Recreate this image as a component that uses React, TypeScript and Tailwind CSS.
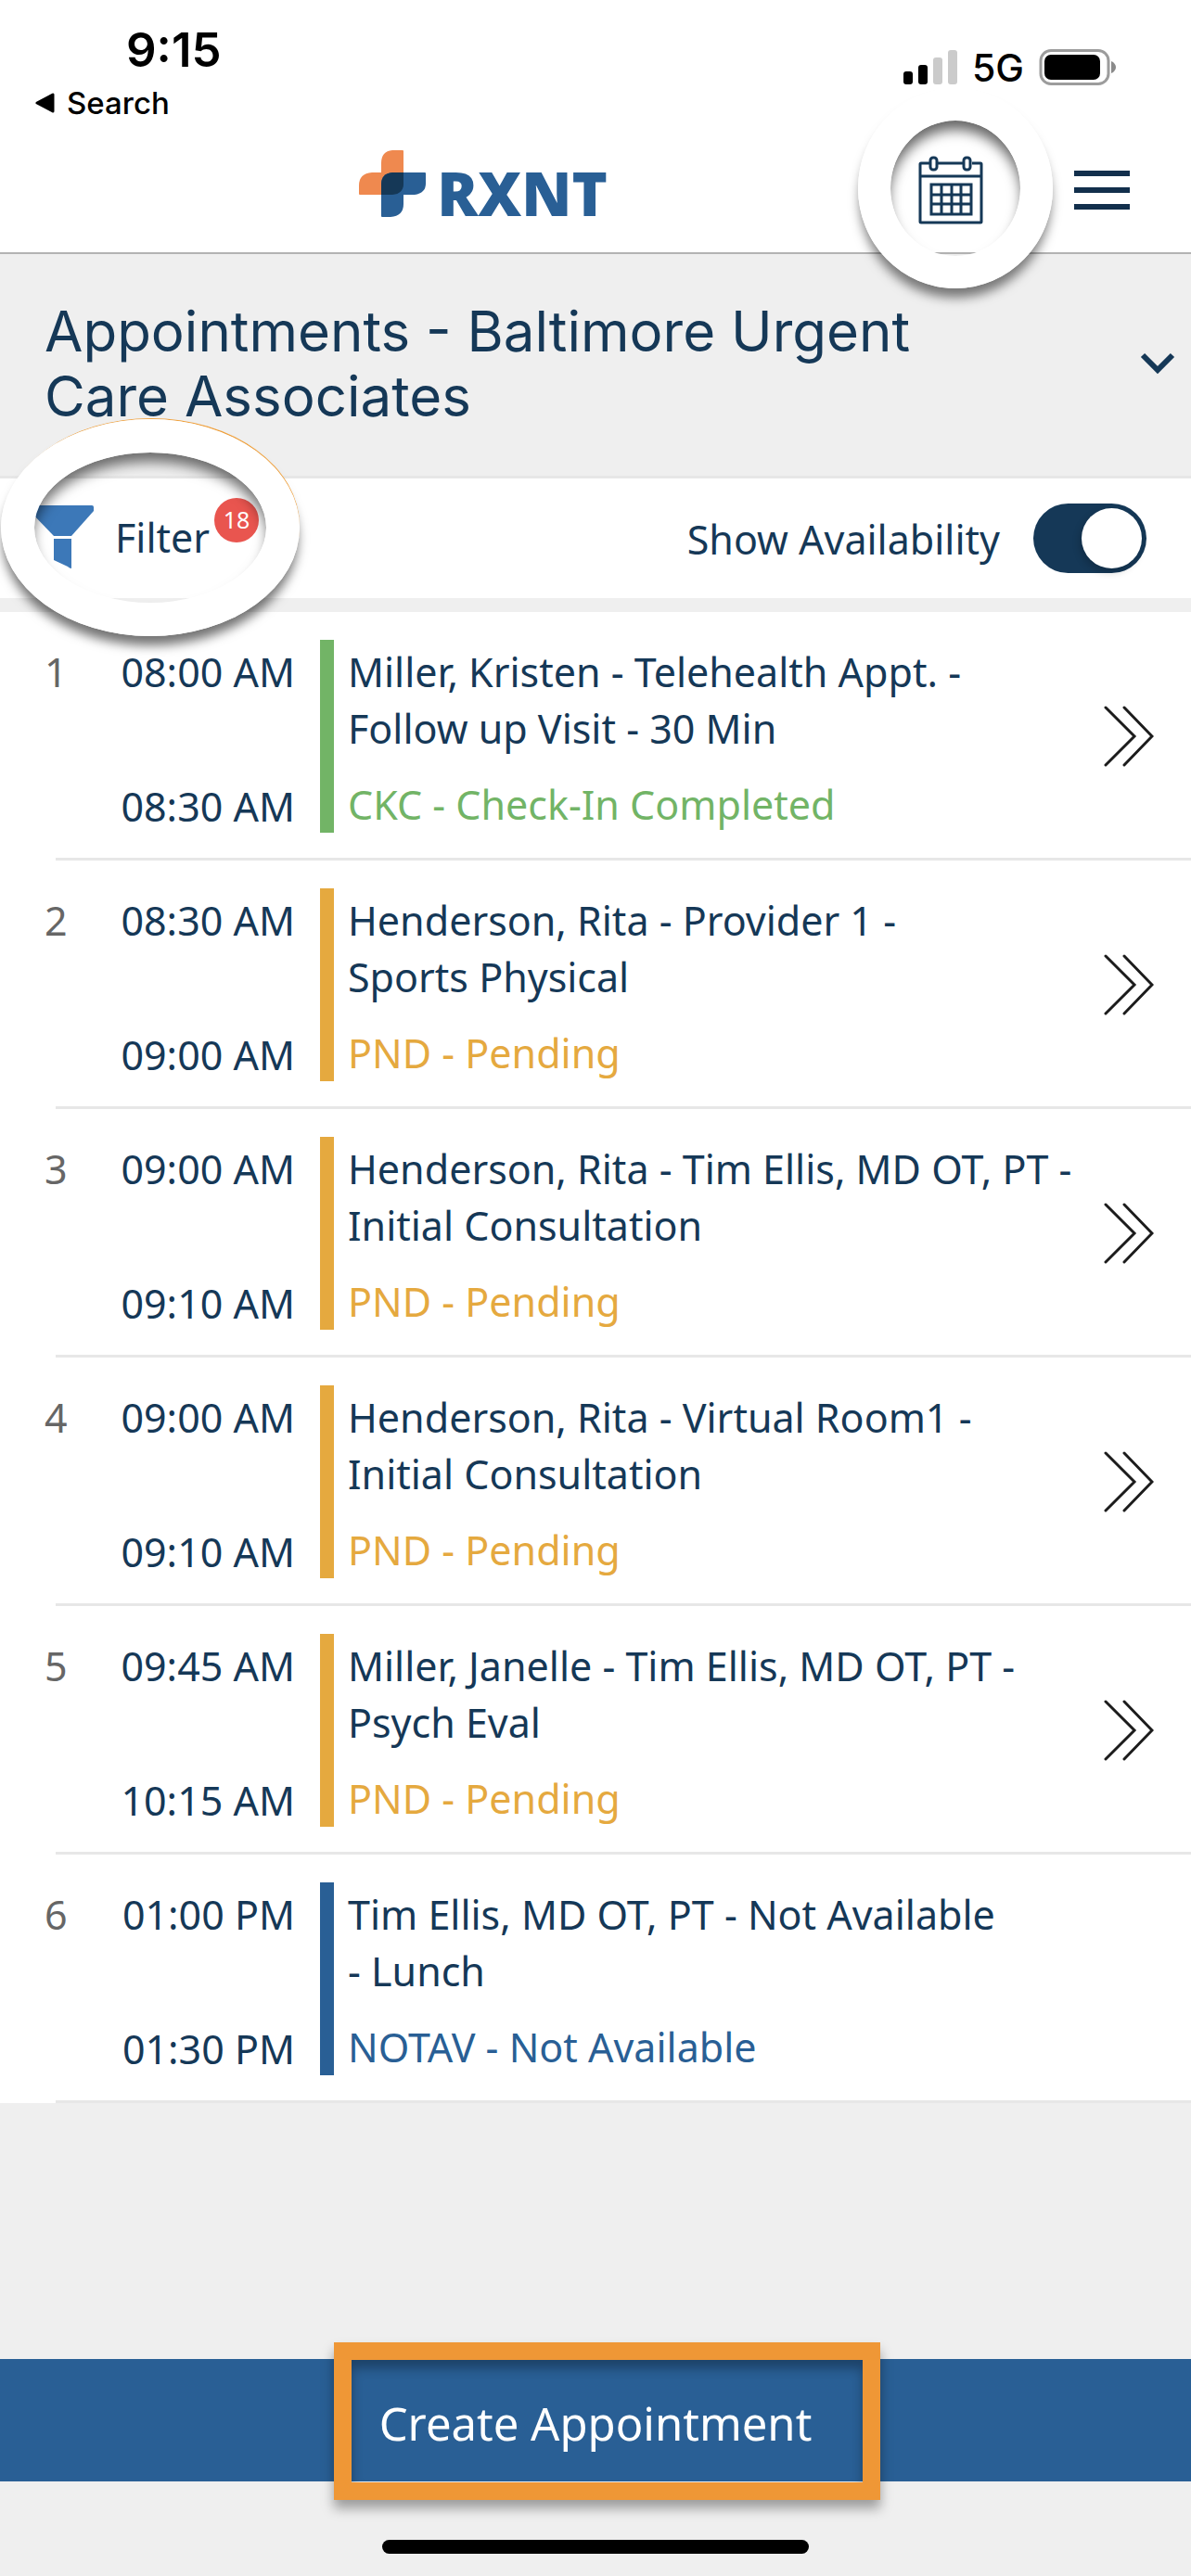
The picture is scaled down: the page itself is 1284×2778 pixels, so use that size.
import { useState } from "react";

type Status = "done" | "pending" | "blocked";

interface Appointment {
  start: string;
  end: string;
  title: string;
  note: string;
  status: Status;
}

const appointments: Appointment[] = [
  { start: "08:00 AM", end: "08:30 AM", title: "Miller, Kristen - Telehealth Appt. -\nFollow up Visit - 30 Min", note: "CKC - Check-In Completed", status: "done" },
  { start: "08:30 AM", end: "09:00 AM", title: "Henderson, Rita - Provider 1 -\nSports Physical", note: "PND - Pending", status: "pending" },
  { start: "09:00 AM", end: "09:10 AM", title: "Henderson, Rita - Tim Ellis, MD OT, PT -\nInitial Consultation", note: "PND - Pending", status: "pending" },
  { start: "09:00 AM", end: "09:10 AM", title: "Henderson, Rita - Virtual Room1 -\nInitial Consultation", note: "PND - Pending", status: "pending" },
  { start: "09:45 AM", end: "10:15 AM", title: "Miller, Janelle - Tim Ellis, MD OT, PT -\nPsych Eval", note: "PND - Pending", status: "pending" },
  { start: "01:00 PM", end: "01:30 PM", title: "Tim Ellis, MD OT, PT - Not Available\n- Lunch", note: "NOTAV - Not Available", status: "blocked" },
];

const barColor: Record<Status, string> = {
  done: "bg-[#72b466]",
  pending: "bg-[#e5a93f]",
  blocked: "bg-[#295f95]",
};

const noteColor: Record<Status, string> = {
  done: "text-[#72b466]",
  pending: "text-[#e5a93f]",
  blocked: "text-[#295f95]",
};

function StatusBar() {
  return (
    <div className="flex justify-between font-['Inter',sans-serif] text-black">
      <div className="pt-6 pl-9">
        <div className="pl-[100px] text-[51px] leading-[60px] font-semibold">9:15</div>
        <a href="#search" className="flex items-center gap-3 text-[33px] leading-[54px] font-medium">
          <svg width="24" height="22" viewBox="0 0 24 22" aria-hidden="true">
            <path d="M21 2v18L4 11z" fill="#000" stroke="#000" strokeWidth="3" strokeLinejoin="round" />
          </svg>
          Search
        </a>
      </div>
      <div className="relative z-10 mt-[53px] flex h-10 items-center pr-20">
        <svg width="58" height="38" viewBox="0 0 58 38" aria-label="Signal strength">
          <rect x="0" y="23" width="10" height="14" rx="3" />
          <rect x="16" y="16" width="10" height="21" rx="3" />
          <rect x="32" y="8" width="10" height="29" rx="3" fill="#cbcbcb" />
          <rect x="48" y="0" width="10" height="37" rx="3" fill="#cbcbcb" />
        </svg>
        <span className="pr-4 pl-4 text-[41px] leading-10 font-medium">5G</span>
        <svg width="84" height="40" viewBox="0 0 84 40" aria-label="Battery">
          <rect x="2" y="1.5" width="73" height="36" rx="11" fill="none" stroke="#9c9c9c" strokeWidth="3" />
          <rect x="6" y="6" width="60" height="27" rx="7" />
          <path d="M78 13c3 1 5 4 5 6.500s-2 5.500-5 6.500z" fill="#8a8a8a" />
        </svg>
      </div>
    </div>
  );
}

function Logo() {
  return (
    <div className="flex items-end gap-3">
      <svg width="72" height="72" viewBox="0 0 72 72" aria-hidden="true">
        <path d="M48 0H36Q24 1 24 14V24H14Q0 25 0 38V47Q0 48 1 48H48V1Q48 0 47 0z" fill="#ef894f" />
        <path d="M71 24H36Q24 25 24 37V71Q24 72 25 72H34Q48 71 48 58V48H60Q72 46 72 36V25Q72 24 71 24z" fill="#295f95" />
        <path d="M48 24H36Q24 25 24 37V48H36Q48 47 48 36z" fill="#153857" />
      </svg>
      <span className="font-['Open_Sans',sans-serif] text-[65px] leading-[52px] font-extrabold text-[#295f95]">RXNT</span>
    </div>
  );
}

function CalendarIcon() {
  return (
    <svg width="70" height="74" viewBox="0 0 70 74" fill="none" stroke="#153857" strokeWidth="3" aria-hidden="true">
      <path d="M12 8H3Q2 8 2 9V71Q2 72 3 72H67Q68 72 68 71V9Q68 8 67 8H58M21 8H49M2 22H68" />
      <rect x="13" y="2" width="7" height="13" rx="3" />
      <rect x="49" y="2" width="7" height="13" rx="3" />
      <path d="M14 31H57V63H14zM25 31V63M36 31V63M46 31V63M14 42H57M14 52H57" />
    </svg>
  );
}

function Header() {
  return (
    <header className="relative z-20 border-b-2 border-[#b3b3b3] bg-white">
      <StatusBar />
      <div className="flex h-[134px] items-center justify-end">
        <div className="flex flex-1 justify-center pb-3.5 pl-[52px]">
          <Logo />
        </div>
        <div className="flex items-center gap-[98px] pr-[66px]">
          <button type="button" aria-label="Open calendar" className="relative">
            <CalendarIcon />
            <span className="pointer-events-none absolute -top-[73px] -left-[65px] h-[216px] w-[210px] rounded-[50%] border-[35px] border-white shadow-[0_12px_12px_-2px_rgba(0,0,0,0.5),inset_0_12px_14px_-2px_rgba(0,0,0,0.6)]" />
          </button>
          <button type="button" aria-label="Menu" className="flex w-[60px] flex-col gap-3">
            <span className="h-1.5 bg-[#122f4c]" />
            <span className="h-1.5 bg-[#122f4c]" />
            <span className="h-1.5 bg-[#122f4c]" />
          </button>
        </div>
      </div>
    </header>
  );
}

function AppointmentRow({ item, index }: { item: Appointment; index: number }) {
  return (
    <li className="pt-[30px]">
      <div className="flex min-h-52 text-[43px] leading-[61px]">
        <span className="w-[118px] pt-1 pl-12 text-[#666]">{index}</span>
        <div className="-mb-0.5 flex w-[200px] flex-col justify-between pt-1 text-right">
          <time>{item.start}</time>
          <time>{item.end}</time>
        </div>
        <span className={`ml-[27px] w-[15px] ${barColor[item.status]}`} />
        <div className="flex flex-1 flex-col justify-between pt-1 pl-[15px]">
          <p className="whitespace-pre-line">{item.title}</p>
          <p className={noteColor[item.status]}>{item.note}</p>
        </div>
        {item.status !== "blocked" && (
          <button type="button" aria-label={`Open appointment ${index}`} className="mr-10 flex items-center">
            <svg width="54" height="66" viewBox="0 0 54 66" fill="none" stroke="#1c1c1c" strokeWidth="3" strokeLinecap="round" aria-hidden="true">
              <path d="M2 2L33 33L2 64M22 2L52 33L22 64" />
            </svg>
          </button>
        )}
      </div>
      <div className="mt-[27px] ml-[60px] h-[3px] bg-[#e7e7e7]" />
    </li>
  );
}

export default function App() {
  const [available, setAvailable] = useState(true);

  return (
    <div className="flex min-h-screen flex-col bg-[#efefef] font-['Noto_Sans',sans-serif] text-[#153857]">
      <Header />

      <section className="flex items-center justify-between border-b-[3px] border-[#e7e7e7] pt-12 pr-4 pb-[51px] pl-12">
        <h1 className="max-w-[1060px] font-['Inter',sans-serif] text-[60px] leading-[70px]">
          Appointments - Baltimore Urgent Care Associates
        </h1>
        <button type="button" aria-label="Change practice">
          <svg width="40" height="26" viewBox="0 0 40 26" fill="none" stroke="#153857" strokeWidth="6" aria-hidden="true">
            <path d="M4 4L20 20L36 4" />
          </svg>
        </button>
      </section>

      <section className="relative z-10 flex h-36 items-center justify-between border-b-[15px] border-[#efefef] bg-white pr-12 pl-8 text-[43px]">
        <button type="button" className="relative flex items-center gap-[22px]">
          <svg width="70" height="72" viewBox="0 0 70 72" fill="#3c78b8" aria-hidden="true">
            <path d="M0 0H67Q69 0 69 2V6L45 33H26L0 6z" />
            <path d="M26 36H45V68Q43 68 41 66L26 59z" />
          </svg>
          <span>Filter</span>
          <span className="absolute -top-2 left-[199px] flex size-12 items-center justify-center rounded-full bg-[#e9554f] text-[25px] leading-none text-white">18</span>
          <span className="pointer-events-none absolute -top-[93px] -left-[31px] h-[234px] w-[322px] rounded-[50%] border-[36px] border-white shadow-[1px_-2px_0_-1px_#f0a23f,0_12px_12px_-2px_rgba(0,0,0,0.55),inset_0_12px_14px_-2px_rgba(0,0,0,0.55)]" />
        </button>
        <label className="flex items-center gap-9">
          <span className="pt-1">Show Availability</span>
          <input
            type="checkbox"
            role="switch"
            checked={available}
            onChange={(e) => setAvailable(e.target.checked)}
            className="flex h-[75px] w-[122px] appearance-none items-center rounded-full bg-[#153857] px-[5px] before:size-[65px] before:rounded-full before:bg-white before:shadow-[-2px_4px_8px_rgba(0,0,0,0.2)] checked:justify-end"
          />
        </label>
      </section>

      <ol className="bg-white">
        {appointments.map((item, i) => (
          <AppointmentRow key={i} item={item} index={i + 1} />
        ))}
      </ol>

      <footer className="mt-auto">
        <button type="button" className="relative flex h-[132px] w-full items-center justify-center bg-[#295f95] pt-2 text-[49px] text-white">
          Create Appointment
          <span className="pointer-events-none absolute -top-[18px] left-1/2 -ml-[282px] h-[170px] w-[589px] border-[19px] border-[#ef9736] shadow-[0_9px_12px_rgba(0,0,0,0.35),inset_0_9px_12px_rgba(0,0,0,0.3)]" />
        </button>
        <div className="flex h-[102px] items-end justify-center pb-6">
          <span className="h-[15px] w-[460px] rounded-full bg-black" />
        </div>
      </footer>
    </div>
  );
}
